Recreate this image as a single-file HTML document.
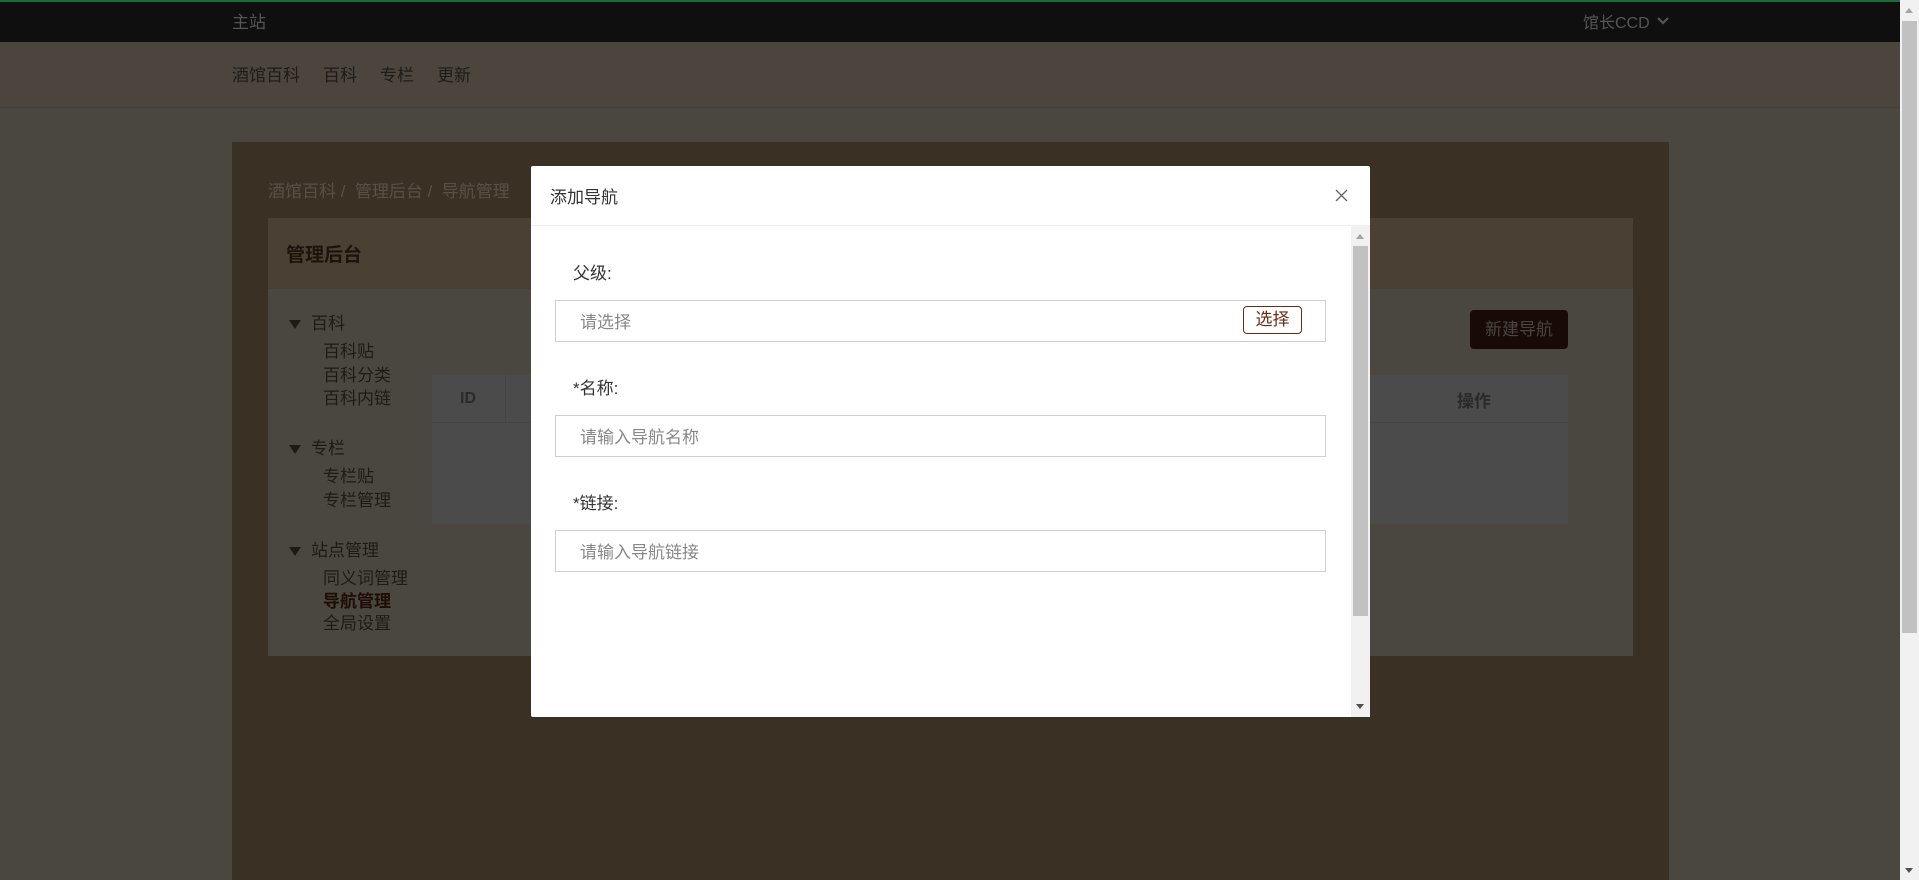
<!DOCTYPE html>
<html><head><meta charset="utf-8"><style>
*{margin:0;padding:0;box-sizing:border-box}
body{width:1919px;height:880px;overflow:hidden;background:#4a4740;font-family:"Liberation Sans","Noto Sans CJK SC",sans-serif;position:relative}
.abs{position:absolute}
.t{white-space:nowrap}
.s{position:absolute;white-space:nowrap;font-size:17px;line-height:23px;color:#1e1a16}
</style></head><body>
<div class="abs" style="left:0;top:0;width:1900px;height:42px;background:#0f0f0f;border-top:2px solid #1d6b3c"></div>
<div class="abs t" style="left:232px;top:8px;font-size:17px;color:#555">主站</div>
<div class="abs t" style="left:1583px;top:9px;font-size:16px;color:#555">馆长CCD</div>
<svg class="abs" style="left:1656px;top:16px" width="14" height="10"><path d="M2 2 L7 7 L12 2" stroke="#555" stroke-width="2.2" fill="none"/></svg>
<div class="abs" style="left:0;top:42px;width:1900px;height:66px;background:#4b453e;border-bottom:1px solid #45403a"></div>
<div class="abs t" style="left:232px;top:61px;font-size:17px;color:#1e1b18">酒馆百科<span style="margin-left:23px">百科</span><span style="margin-left:23px">专栏</span><span style="margin-left:23px">更新</span></div>
<div class="abs" style="left:232px;top:142px;width:1437px;height:738px;background:#3b3024"></div>
<div class="abs t" style="left:268px;top:177px;font-size:17px;color:#5a5046">酒馆百科 / &nbsp;管理后台 / &nbsp;导航管理</div>
<div class="abs" style="left:268px;top:218px;width:1365px;height:71px;background:#4a4034"></div>
<div class="abs t" style="left:286px;top:240px;font-size:19px;font-weight:bold;color:#1e130c">管理后台</div>
<div class="abs" style="left:268px;top:289px;width:1365px;height:367px;background:#4a4740"></div>
<div class="abs" style="left:432px;top:375px;width:1136px;height:149px;background:#4b4b4b"></div>
<div class="abs" style="left:432px;top:422px;width:1136px;height:1px;background:#444"></div>
<div class="abs" style="left:505px;top:375px;width:1px;height:48px;background:#444"></div>
<div class="abs t" style="left:460px;top:390px;font-size:16px;font-weight:bold;color:#2a2a2a">ID</div>
<div class="abs t" style="left:1457px;top:387px;font-size:17px;font-weight:bold;color:#2a2a2a">操作</div>
<div class="abs t" style="left:1470px;top:310px;width:98px;height:39px;background:#180a05;border-radius:4px;color:#4a4540;font-size:17px;line-height:39px;text-align:center">新建导航</div>
<svg class="abs" style="left:288px;top:319px" width="14" height="11"><path d="M1 1H13L7 10Z" fill="#1e1a16"/></svg>
<svg class="abs" style="left:288px;top:444px" width="14" height="11"><path d="M1 1H13L7 10Z" fill="#1e1a16"/></svg>
<svg class="abs" style="left:288px;top:546px" width="14" height="11"><path d="M1 1H13L7 10Z" fill="#1e1a16"/></svg>
<div class="s" style="left:311px;top:312px">百科</div>
<div class="s" style="left:323px;top:340px">百科贴</div>
<div class="s" style="left:323px;top:364px">百科分类</div>
<div class="s" style="left:323px;top:387px">百科内链</div>
<div class="s" style="left:311px;top:437px">专栏</div>
<div class="s" style="left:323px;top:465px">专栏贴</div>
<div class="s" style="left:323px;top:489px">专栏管理</div>
<div class="s" style="left:311px;top:539px">站点管理</div>
<div class="s" style="left:323px;top:567px">同义词管理</div>
<div class="s" style="left:323px;top:590px;font-weight:bold;color:#1e0c05">导航管理</div>
<div class="s" style="left:323px;top:612px">全局设置</div>
<!-- modal -->
<div class="abs" style="left:531px;top:166px;width:839px;height:551px;background:#fff;border-radius:2px"></div>
<div class="abs" style="left:531px;top:225px;width:839px;height:1px;background:#eee"></div>
<div class="abs t" style="left:550px;top:183px;font-size:17px;color:#333">添加导航</div>
<svg class="abs" style="left:1335px;top:189px" width="13" height="13"><path d="M1 1L12 12M12 1L1 12" stroke="#666" stroke-width="1.3"/></svg>
<div class="abs" style="left:1351px;top:226px;width:19px;height:491px;background:#f1f1f1"></div>
<div class="abs" style="left:1353px;top:246px;width:15px;height:370px;background:#c1c1c1"></div>
<svg class="abs" style="left:1354px;top:232px" width="12" height="8"><path d="M2 7L6 2L10 7Z" fill="#a3a3a3"/></svg>
<svg class="abs" style="left:1354px;top:703px" width="12" height="8"><path d="M2 1L6 6L10 1Z" fill="#505050"/></svg>
<div class="abs t" style="left:573px;top:259px;font-size:17px;color:#333">父级:</div>
<div class="abs" style="left:555px;top:300px;width:771px;height:42px;border:1px solid #ccd0d6"></div>
<div class="abs t" style="left:580px;top:308px;font-size:17px;color:#888">请选择</div>
<div class="abs t" style="left:1243px;top:306px;width:59px;height:28px;border:1px solid #6b2a12;border-radius:4px;color:#6b2a12;font-size:17px;line-height:26px;text-align:center">选择</div>
<div class="abs t" style="left:573px;top:374px;font-size:17px;color:#333">*名称:</div>
<div class="abs" style="left:555px;top:415px;width:771px;height:42px;border:1px solid #ccd0d6"></div>
<div class="abs t" style="left:580px;top:423px;font-size:17px;color:#888">请输入导航名称</div>
<div class="abs t" style="left:573px;top:489px;font-size:17px;color:#333">*链接:</div>
<div class="abs" style="left:555px;top:530px;width:771px;height:42px;border:1px solid #ccd0d6"></div>
<div class="abs t" style="left:580px;top:538px;font-size:17px;color:#888">请输入导航链接</div>
<!-- page scrollbar -->
<div class="abs" style="left:1900px;top:0;width:19px;height:880px;background:#f1f1f1"></div>
<div class="abs" style="left:1902px;top:21px;width:15px;height:612px;background:#c1c1c1"></div>
<svg class="abs" style="left:1903px;top:6px" width="12" height="8"><path d="M2 7L6 2L10 7Z" fill="#a3a3a3"/></svg>
<svg class="abs" style="left:1903px;top:867px" width="12" height="8"><path d="M2 1L6 6L10 1Z" fill="#505050"/></svg>
</body></html>
